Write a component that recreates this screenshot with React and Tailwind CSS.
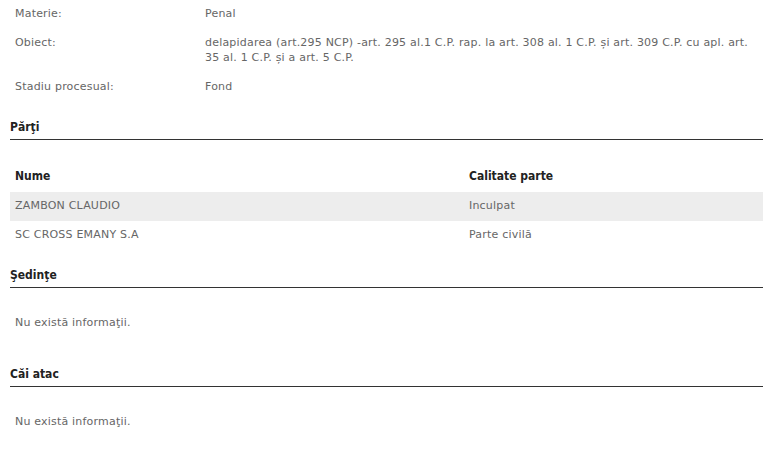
export default function App() {
  const font = { fontFamily: '"DejaVu Sans", Verdana, sans-serif' };
  const bold = { fontFamily: '"DejaVu Sans Condensed", "DejaVu Sans", sans-serif' };
  const Header = ({ children }) => (
    <div
      className="mx-[10px] border-b border-[#333] pb-[4px] text-[12px] font-bold leading-[16px] tracking-normal text-[#222]"
      style={bold}
    >
      {children}
    </div>
  );
  return (
    <div className="w-[773px] h-[463px] bg-white text-[11px] tracking-[0.2px] text-[#666]" style={font}>
      <div className="pt-[6px]">
        <div className="flex px-[15px] leading-[15px]">
          <div className="w-[190px]">Materie:</div>
          <div className="flex-1">Penal</div>
        </div>
        <div className="flex pl-[15px] pr-[10px] leading-[15px] mt-[14px]">
          <div className="w-[190px] shrink-0">Obiect:</div>
          <div className="flex-1">
            delapidarea (art.295 NCP) -art. 295 al.1 C.P. rap. la art. 308 al. 1 C.P. și art. 309 C.P. cu apl. art. 35 al. 1 C.P. și a art. 5 C.P.
          </div>
        </div>
        <div className="flex px-[15px] leading-[15px] mt-[14px]">
          <div className="w-[190px]">Stadiu procesual:</div>
          <div className="flex-1">Fond</div>
        </div>
      </div>
      <div className="mt-[25px]">
        <Header>Părţi</Header>
      </div>
      <div className="mx-[10px] mt-[20px]">
        <div className="flex h-[32px] items-center text-[12px] font-bold tracking-normal text-[#222]" style={bold}>
          <div className="w-[459px] pl-[5px]">Nume</div>
          <div className="flex-1">Calitate parte</div>
        </div>
        <div className="flex h-[29px] items-center bg-[#ededed]">
          <div className="w-[459px] pl-[5px]">ZAMBON CLAUDIO</div>
          <div className="flex-1">Inculpat</div>
        </div>
        <div className="flex h-[29px] items-center">
          <div className="w-[459px] pl-[5px]">SC CROSS EMANY S.A</div>
          <div className="flex-1">Parte civilă</div>
        </div>
      </div>
      <div className="mt-[17px]">
        <Header>Şedinţe</Header>
      </div>
      <div className="px-[15px] mt-[27px] leading-[15px]">Nu există informaţii.</div>
      <div className="mt-[36px]">
        <Header>Căi atac</Header>
      </div>
      <div className="px-[15px] mt-[27px] leading-[15px]">Nu există informaţii.</div>
    </div>
  );
}
